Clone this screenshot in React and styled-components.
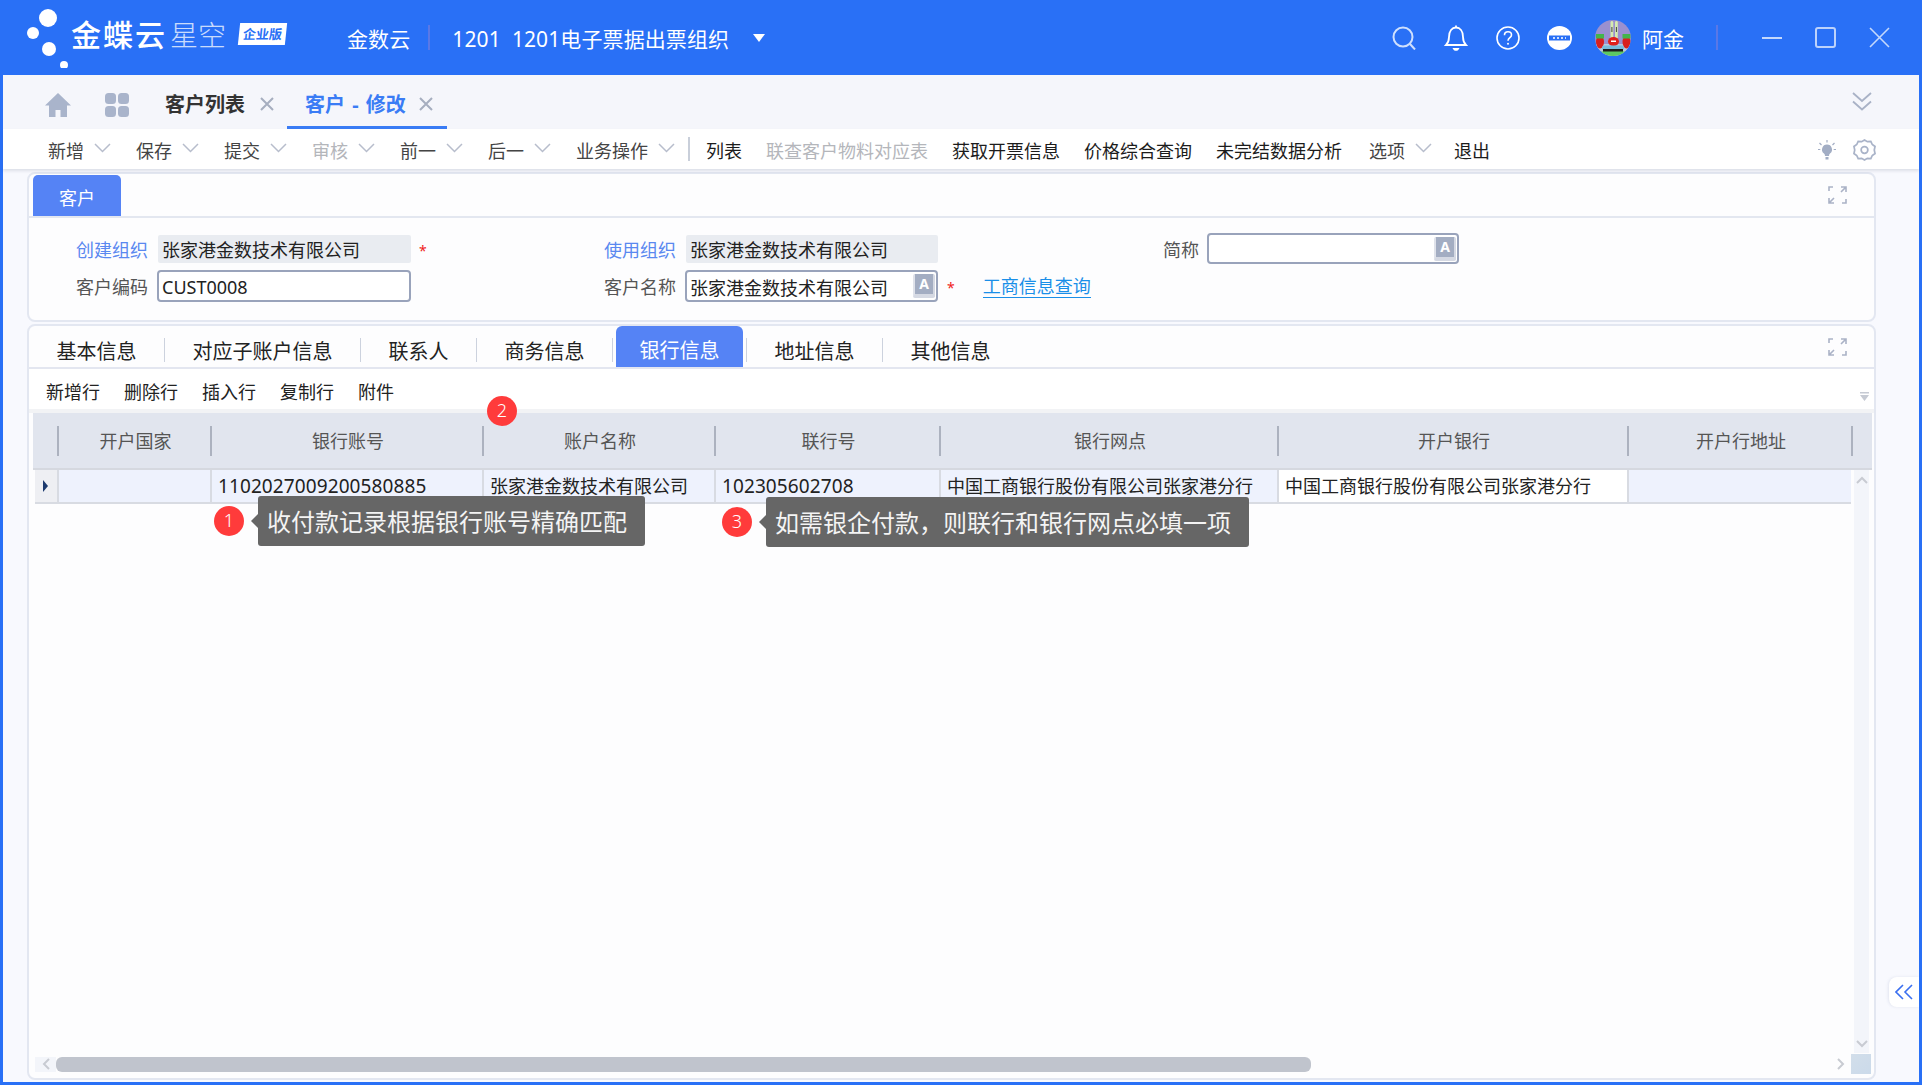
import React from 'react';
import styled, { createGlobalStyle } from 'styled-components';

const GlobalStyle = createGlobalStyle`
  html, body {
    margin: 0;
    padding: 0;
    background: #2970f6;
  }
  body {
    font-family: 'Noto Sans', 'Noto Sans CJK SC', sans-serif;
    color: #222;
  }
  * {
    box-sizing: border-box;
  }
`;

const Root = styled.div`
  position: relative;
  display: flex;
  flex-direction: column;
  width: 1922px;
  height: 1085px;
  background: #2970f6;
  overflow: hidden;
`;

/* top blue bar */
const Header = styled.header`
  display: flex;
  align-items: center;
  flex: 0 0 75px;
  padding: 0 32px 0 24px;
  color: #fff;
`;

const LogoText = styled.span`
  margin: -5px 0 0 -1px;
  font-size: 30px;
  line-height: 40px;
  font-weight: 500;
  letter-spacing: 2px;
`;

const LogoSub = styled.span`
  margin: -5px 0 0 3px;
  font-size: 28px;
  line-height: 40px;
  font-weight: 300;
  opacity: 0.75;
`;

const LogoBadge = styled.span`
  display: block;
  width: 47px;
  height: 22px;
  margin: -8px 0 0 13px;
  background: #fff;
  color: #2970f6;
  font-size: 13px;
  line-height: 22px;
  font-weight: 700;
  text-align: center;
  transform: skewX(-6deg);
`;

const OrgText = styled.span`
  margin-top: 2px;
  margin-left: ${(p) => p.$ml || 0}px;
  font-size: 21px;
  line-height: 30px;
  letter-spacing: 0.1px;
  white-space: pre;
`;

const HeaderDivider = styled.span`
  width: 2px;
  height: 25px;
  margin: 0 ${(p) => p.$mr}px 0 ${(p) => p.$ml}px;
  background: #5a78e6;
`;

const OrgCaret = styled.span`
  width: 0;
  height: 0;
  margin-left: 24px;
  border-left: 6px solid transparent;
  border-right: 6px solid transparent;
  border-top: 8px solid #fff;
`;

const HeaderTools = styled.div`
  display: flex;
  align-items: center;
  gap: 27px;
  margin-left: auto;
`;

const UserBlock = styled.span`
  display: flex;
  align-items: center;
  margin: 1px 0 0 -4px;
`;

const UserName = styled.span`
  margin: 1px 0 0 11px;
  font-size: 21px;
  line-height: 30px;
`;

const WindowButtons = styled.div`
  display: flex;
  align-items: center;
  gap: 33px;
`;

const Icon = styled.svg`
  display: block;
  flex: none;
`;

const Frame = styled.div`
  display: flex;
  flex: 1;
  flex-direction: column;
  min-height: 0;
  margin: 0 3px 3px;
  background: #f8f9fe;
`;

/* page tabs */
const PageTabs = styled.nav`
  display: flex;
  align-items: flex-end;
  flex: 0 0 54px;
  padding: 0 47px 0 42px;
  background: #f5f6fb;
`;

const PageIconSlot = styled.span`
  display: flex;
  align-items: center;
  height: 54px;
  padding-top: 5px;
  margin-right: ${(p) => p.$mr}px;
`;

const PageTab = styled.div`
  display: flex;
  align-items: center;
  gap: ${(p) => (p.$active ? 13 : 15)}px;
  height: 54px;
  padding: 6px ${(p) => (p.$active ? 14 : 13)}px 0 ${(p) => (p.$active ? 18 : 0)}px;
  border-bottom: 3px solid ${(p) => (p.$active ? '#3a7cf5' : 'transparent')};
  color: ${(p) => (p.$active ? '#3a7cf5' : '#333')};
  font-size: 20px;
  font-weight: 700;
  word-spacing: 2px;
  white-space: pre;
`;

const PageCollapse = styled.span`
  display: flex;
  align-items: center;
  height: 54px;
  padding-bottom: 2px;
  margin-left: auto;
`;

/* main toolbar */
const MainBar = styled.div`
  position: relative;
  display: flex;
  align-items: center;
  flex: 0 0 40px;
  padding: 2px 43px 0 45px;
  background: #fff;
  box-shadow: 0 2px 3px rgba(60, 70, 100, 0.14);
  font-size: 18px;
`;

const DropItem = styled.span`
  display: flex;
  align-items: center;
  gap: 10px;
  margin-right: ${(p) => p.$mr ?? 25}px;
  color: ${(p) => (p.$disabled ? '#b4b6bb' : '#444')};
`;

const ChevronSlot = styled.span`
  margin-top: -5px;
`;

const BarItem = styled.span`
  margin-right: ${(p) => p.$mr ?? 24}px;
  color: ${(p) => (p.$disabled ? '#b4b6bb' : '#1c1c1c')};
  white-space: nowrap;
`;

const BarDivider = styled.span`
  width: 2px;
  height: 24px;
  margin: -2px 16px 0 13px;
  background: #c9cfda;
`;

const BarRight = styled.span`
  display: flex;
  align-items: center;
  gap: 17px;
  margin-left: auto;
`;

const Body = styled.main`
  display: flex;
  flex: 1;
  flex-direction: column;
  gap: 2px;
  min-height: 0;
  padding: 3px 43px 2px 24px;
`;

const Card = styled.section`
  display: flex;
  flex-direction: column;
  ${(p) => (p.$grow ? 'flex: 1; min-height: 0;' : 'flex: 0 0 150px;')}
  background: #fdfdfe;
  border: 2px solid #e3e7f1;
  border-radius: 8px;
`;

const CardHead = styled.div`
  display: flex;
  align-items: flex-end;
  justify-content: space-between;
  flex: 0 0 44px;
  padding: 0 27px 0 4px;
  border-bottom: 2px solid #e3e7f0;
`;

const CardTitle = styled.div`
  width: 88px;
  height: 41px;
  background: #5583f5;
  border-radius: 5px 5px 0 0;
  color: #fff;
  font-size: 18px;
  line-height: 47px;
  text-align: center;
`;

const ExpandSlot = styled.span`
  align-self: flex-start;
  margin-top: 12px;
`;

const FormGrid = styled.div`
  display: grid;
  grid-template-columns: 128px 254px 193px 81px 253px 225px 44px 252px;
  grid-template-rows: 28px 32px;
  row-gap: 7px;
  align-items: center;
  padding-top: 17px;
  font-size: 18px;
`;

const FieldLabel = styled.label`
  padding-right: 9px;
  color: ${(p) => (p.$link ? '#5a88f0' : '#555')};
  text-align: right;
  white-space: nowrap;
`;

const ReadOnlyBox = styled.div`
  height: 28px;
  margin-left: 1px;
  padding-left: 4px;
  background: #e9ecf1;
  border-radius: 2px;
  line-height: 30px;
  white-space: nowrap;
`;

const InputBox = styled.div`
  display: flex;
  align-items: center;
  justify-content: space-between;
  height: ${(p) => p.$h || 32}px;
  margin-top: ${(p) => (p.$h ? -1 : 0)}px;
  padding: 1px 1px 0 3px;
  background: #fff;
  border: 2px solid #99a3bb;
  border-radius: 4px;
  white-space: nowrap;
`;

const LangMark = styled.span`
  display: block;
  width: 22px;
  height: 24px;
  margin-top: -1px;
  background: #a3adc2;
  border-left: 2px solid #dfe2ea;
  border-right: 2px solid #d5d9e3;
  border-bottom: 4px solid #d5d9e3;
  border-radius: 2px;
  color: #fff;
  font-size: 14px;
  font-weight: 700;
  line-height: 20px;
  text-align: center;
`;

const Required = styled.span`
  padding-left: ${(p) => p.$pl}px;
  margin-top: 3px;
  color: #f01c1c;
  font-size: 14px;
  line-height: 18px;
`;

const ExtraCell = styled.span`
  display: flex;
  align-items: center;
`;

const QueryLink = styled.a`
  margin-left: 28px;
  border-bottom: 1px solid #1a8fe8;
  color: #1a8fe8;
  line-height: 22px;
  white-space: nowrap;
`;

/* detail tabs */
const DetailTabs = styled.div`
  display: flex;
  align-items: flex-end;
  flex: 0 0 43px;
  border-bottom: 2px solid #e3e6f0;
`;

const DetailTab = styled.div`
  height: 24px;
  margin-bottom: 5px;
  padding: 0 27.5px;
  border-left: ${(p) => (p.$lead ? '1px solid #ccd2de' : '0')};
  border-right: ${(p) => (p.$last ? '0' : '1px solid #ccd2de')};
  color: #222;
  font-size: 20px;
  line-height: 27px;
  white-space: nowrap;
`;

const DetailTabActive = styled.div`
  width: 127px;
  height: 41px;
  margin: 0 3px;
  background: #5583f5;
  border-radius: 6px 6px 0 0;
  color: #fff;
  font-size: 20px;
  line-height: 50px;
  text-align: center;
`;

const DetailExpand = styled.span`
  align-self: flex-start;
  margin: 12px 27px 0 auto;
`;

const RowTools = styled.div`
  display: flex;
  align-items: center;
  flex: 0 0 40px;
  gap: 24px;
  padding: 3px 5px 0 17px;
  background: #fff;
  color: #222;
  font-size: 18px;
`;

const SortMark = styled.span`
  margin: 11px 0 0 auto;
`;

const Band = styled.div`
  flex: 0 0 4px;
  background: #f2f3f5;
`;

const TableHead = styled.div`
  display: grid;
  grid-template-columns: 26px 153px 272px 232px 225px 338px 350px 224px 19px;
  grid-template-rows: 55px;
  flex: 0 0 57px;
  margin: 0 2px 0 4px;
  background: #e1e5ee;
  border-bottom: 2px solid #d5d8df;
`;

const HeadCell = styled.div`
  height: 55px;
  color: #555;
  font-size: 18px;
  line-height: 56px;
  text-align: center;
  background: linear-gradient(#acb2bf, #acb2bf) right center / 2px 30px no-repeat;
`;

const HeadEnd = styled.div``;

const TableMain = styled.div`
  display: flex;
  flex: 1;
  min-height: 0;
  margin: 0 5px 0 6px;
`;

const TableData = styled.div`
  flex: 1;
`;

const DataRow = styled.div`
  display: grid;
  grid-template-columns: 24px 153px 272px 232px 225px 338px 350px 222px;
  grid-template-rows: 32px;
  height: 34px;
  border-bottom: 2px solid #d8dbe2;
`;

const RowMarker = styled.div`
  display: flex;
  align-items: center;
  padding-left: 8px;
  background: #eeeff3;
  border-right: 2px solid #d8dbe2;
`;

const MarkerArrow = styled.span`
  width: 0;
  height: 0;
  border-top: 6px solid transparent;
  border-bottom: 6px solid transparent;
  border-left: 5px solid #1c3a6e;
`;

const DataCell = styled.div`
  padding-left: 6px;
  overflow: hidden;
  background: ${(p) => (p.$plain ? '#fff' : '#eef2fd')};
  border-right: ${(p) => (p.$end ? '0' : '2px solid #d8dbe2')};
  color: #222;
  font-size: ${(p) => (p.$num ? 19 : 18)}px;
  letter-spacing: ${(p) => (p.$num ? 0.1 : 0)}px;
  line-height: 33px;
  white-space: nowrap;
`;

const VScroll = styled.div`
  display: flex;
  align-items: center;
  justify-content: space-between;
  flex-direction: column;
  flex: 0 0 15px;
  margin-left: 3px;
  padding: 6px 0 5px;
  background: #f3f5fa;
`;

const HScroll = styled.div`
  display: flex;
  align-items: center;
  flex: 0 0 20px;
  margin: 1px 3px 4px 6px;
`;

const HScrollStart = styled.div`
  display: flex;
  align-items: center;
  justify-content: center;
  width: 21px;
  height: 15px;
  background: #f3f5fa;
`;

const HScrollThumb = styled.div`
  width: 1255px;
  height: 15px;
  background: #c0c4cd;
  border-radius: 6px;
`;

const HScrollEnd = styled.div`
  display: flex;
  align-items: center;
  justify-content: flex-end;
  flex: 1;
  padding-right: 6px;
`;

const ScrollCorner = styled.div`
  width: 20px;
  height: 20px;
  background: linear-gradient(135deg, #d2deea, #cbdaea);
`;

/* things lying over the table */
const Badge = styled.span`
  position: absolute;
  left: ${(p) => p.$x}px;
  top: ${(p) => p.$y}px;
  width: 30px;
  height: 30px;
  background: #ff3b3b;
  border-radius: 50%;
  color: #fff;
  font-size: 18px;
  font-weight: 300;
  line-height: 29px;
  text-align: center;
`;

const Hint = styled.div`
  position: absolute;
  left: ${(p) => p.$x}px;
  top: ${(p) => p.$y}px;
  width: ${(p) => p.$w}px;
  height: 50px;
  padding-left: 9px;
  background: #666;
  border-radius: 3px;
  color: #f4f4f4;
  font-size: 24px;
  line-height: 51px;
  white-space: nowrap;
  &::before {
    content: '';
    position: absolute;
    left: -7px;
    top: 18px;
    border-top: 7px solid transparent;
    border-bottom: 7px solid transparent;
    border-right: 7px solid #666;
  }
`;

const SideToggle = styled.button`
  position: absolute;
  left: 1889px;
  top: 977px;
  display: flex;
  align-items: center;
  justify-content: center;
  width: 30px;
  height: 30px;
  padding: 0;
  background: #fff;
  border: 0;
  border-radius: 8px 0 0 8px;
  box-shadow: -1px 0 3px rgba(80, 100, 150, 0.12);
`;

const DropChevron = () => (
  <ChevronSlot>
    <Icon width="17" height="10" viewBox="0 0 17 10" fill="none" stroke="#b7bdcc" strokeWidth="1.500">
      <path d="M1 1l7.500 7.500L16 1" />
    </Icon>
  </ChevronSlot>
);

const TabClose = ({ color }) => (
  <Icon width="14" height="14" viewBox="0 0 14 14" fill="none" stroke={color} strokeWidth="2">
    <path d="M1 1l12 12M13 1L1 13" />
  </Icon>
);

const ExpandIcon = () => (
  <Icon width="19" height="18" viewBox="0 0 19 18" fill="none" stroke="#aab2c6" strokeWidth="1.600">
    <path d="M1 5V1h4M18 13v4h-4M13 1h5v5M18 1l-5 5M1 12v5h5M1 17l5-5" />
  </Icon>
);

const ScrollChevron = ({ d, w = 12, h = 8 }) => (
  <Icon width={w} height={h} viewBox={`0 0 ${w} ${h}`} fill="none" stroke="#c8cbd2" strokeWidth="2">
    <path d={d} />
  </Icon>
);

const Krabs = () => (
  <Icon width="36" height="36" viewBox="0 0 36 36">
    <defs>
      <clipPath id="avatarClip">
        <circle cx="18" cy="18" r="18" />
      </clipPath>
    </defs>
    <g clipPath="url(#avatarClip)">
      <rect width="36" height="36" fill="#9a90cf" />
      <rect y="24" width="36" height="12" fill="#b9c9dc" />
      <rect x="15.500" y="1" width="2.800" height="18" rx="1.400" fill="#d5eab0" />
      <rect x="20" y="1" width="2.800" height="18" rx="1.400" fill="#d5eab0" />
      <rect x="16.400" y="7" width="1" height="5" fill="#444" />
      <rect x="20.900" y="7" width="1" height="5" fill="#444" />
      <ellipse cx="18.500" cy="21.500" rx="5.500" ry="4.500" fill="#e0201c" />
      <rect x="16" y="20.500" width="5" height="1.500" fill="#fff" />
      <ellipse cx="5" cy="22" rx="4" ry="6.500" fill="#d8201f" />
      <ellipse cx="31.500" cy="22" rx="4" ry="6.500" fill="#d8201f" />
      <path d="M1 14h8v4.500H1zM27.500 14h8v4.500h-8z" fill="#43b54a" />
      <rect x="7" y="25.500" width="22" height="4.500" rx="2" fill="#78bcdc" />
      <rect x="8" y="29" width="20" height="3.500" fill="#1d1d1d" />
      <rect x="0" y="31.500" width="36" height="4.500" fill="#5cc863" />
    </g>
  </Icon>
);

const tableColumns = ['开户国家', '银行账号', '账户名称', '联行号', '银行网点', '开户银行', '开户行地址'];

const App = () => {
  return (
    <Root>
      <GlobalStyle />
      <Header>
        <Icon width="48" height="60" viewBox="0 0 48 60" fill="#fff">
          <circle cx="24" cy="10" r="9" />
          <circle cx="9" cy="25" r="6" />
          <circle cx="25" cy="41" r="7" />
          <circle cx="40" cy="57" r="4" />
        </Icon>
        <LogoText>金蝶云</LogoText>
        <LogoSub>星空</LogoSub>
        <LogoBadge>企业版</LogoBadge>
        <OrgText $ml={61}>金数云</OrgText>
        <HeaderDivider $ml={18} $mr={22} />
        <OrgText>{'1201  1201电子票据出票组织'}</OrgText>
        <OrgCaret />
        <HeaderTools>
          <Icon width="24" height="24" viewBox="0 0 24 24" fill="none" stroke="#cfe0fd" strokeWidth="2">
            <circle cx="11" cy="11" r="9.500" />
            <path d="M18 18l5 5.500" />
          </Icon>
          <Icon width="26" height="27" viewBox="0 0 26 27" fill="none" stroke="#fff" strokeWidth="1.800">
            <path d="M13 1.500v2M3 21c2-2 3-4 3-8 0-6 3-9.500 7-9.500s7 3.500 7 9.500c0 4 1 6 3 8z" />
            <path d="M9.500 24h7c-.8 2-2 2.800-3.500 2.800S10.300 26 9.500 24z" fill="#fff" stroke="none" />
          </Icon>
          <Icon width="24" height="24" viewBox="0 0 24 24" fill="none" stroke="#fff" strokeWidth="1.600">
            <circle cx="12" cy="12" r="11" />
            <path d="M8.500 9.200C8.500 7 10 5.800 12 5.800s3.500 1.300 3.500 3.200c0 2.600-3.500 2.800-3.500 5.800" />
            <circle cx="12" cy="17.800" r="1" fill="#fff" stroke="none" />
          </Icon>
          <Icon width="25" height="24" viewBox="0 0 25 24">
            <ellipse cx="12.500" cy="12" rx="12.500" ry="12" fill="#fff" />
            <rect x="2" y="9.500" width="21" height="5" fill="#2970f6" />
            <path d="M6 12h13" stroke="#fff" strokeWidth="1.500" strokeDasharray="2 2" />
          </Icon>
          <UserBlock>
            <Krabs />
            <UserName>阿金</UserName>
          </UserBlock>
        </HeaderTools>
        <HeaderDivider $ml={32} $mr={44} />
        <WindowButtons>
          <Icon width="20" height="20" viewBox="0 0 20 20" stroke="#c4d8fc" strokeWidth="2">
            <path d="M0 10h20" />
          </Icon>
          <Icon width="21" height="21" viewBox="0 0 21 21" fill="none" stroke="#bcd2fb" strokeWidth="2">
            <rect x="1" y="1" width="19" height="19" rx="2" />
          </Icon>
          <Icon width="21" height="21" viewBox="0 0 21 21" stroke="#c4d8fc" strokeWidth="1.600">
            <path d="M1 1l19 19M20 1L1 20" />
          </Icon>
        </WindowButtons>
      </Header>

      <Frame>
        <PageTabs>
          <PageIconSlot $mr={34}>
            <Icon width="26" height="24" viewBox="0 0 26 24" fill="#a9b4cb">
              <path d="M13 0L0 12.500h4V24h6.500v-7h5v7H22V12.500h4z" />
            </Icon>
          </PageIconSlot>
          <PageIconSlot $mr={36}>
            <Icon width="24" height="24" viewBox="0 0 24 24" fill="#a9b4cb">
              <rect x="0" y="0" width="11" height="11" rx="3.500" />
              <rect x="13" y="0" width="11" height="11" rx="3.500" />
              <rect x="0" y="13" width="11" height="11" rx="3.500" />
              <rect x="13" y="13" width="11" height="11" rx="3.500" />
            </Icon>
          </PageIconSlot>
          <PageTab>
            客户列表
            <TabClose color="#a6aebf" />
          </PageTab>
          <PageTab $active>
            客户 - 修改
            <TabClose color="#a6aebf" />
          </PageTab>
          <PageCollapse>
            <Icon width="20" height="19" viewBox="0 0 20 19" fill="none" stroke="#a9b2c6" strokeWidth="1.800">
              <path d="M1 1l9 8 9-8M1 9.500l9 8 9-8" />
            </Icon>
          </PageCollapse>
        </PageTabs>

        <MainBar>
          <DropItem>新增<DropChevron /></DropItem>
          <DropItem>保存<DropChevron /></DropItem>
          <DropItem>提交<DropChevron /></DropItem>
          <DropItem $disabled>审核<DropChevron /></DropItem>
          <DropItem>前一<DropChevron /></DropItem>
          <DropItem>后一<DropChevron /></DropItem>
          <DropItem $mr={0}>业务操作<DropChevron /></DropItem>
          <BarDivider />
          <BarItem>列表</BarItem>
          <BarItem $disabled>联查客户物料对应表</BarItem>
          <BarItem>获取开票信息</BarItem>
          <BarItem>价格综合查询</BarItem>
          <BarItem $mr={27}>未完结数据分析</BarItem>
          <DropItem $mr={22}>选项<DropChevron /></DropItem>
          <BarItem>退出</BarItem>
          <BarRight>
            <Icon width="18" height="20" viewBox="0 0 18 20" fill="#a2adc4">
              <path d="M9 4.500a5 5 0 0 0-3 9c.7.6 1 1.500 1 2.500h4c0-1 .3-1.900 1-2.500a5 5 0 0 0-3-9zM7.500 17h3v2.500h-3z" />
              <path d="M9 0v2.500M1.500 3l2 2M16.500 3l-2 2M0 9.500h2.300M15.700 9.500H18" stroke="#a2adc4" strokeWidth="1.200" />
            </Icon>
            <Icon width="23" height="24" viewBox="0 0 24 24" fill="none" stroke="#a9b3c8" strokeWidth="1.800">
              <circle cx="12" cy="12" r="3.500" />
              <path d="M12 1.500l3 1.800 3.600-.2 1.500 3.200 2.900 2-.8 3.700.8 3.700-2.900 2-1.500 3.200-3.600-.2-3 1.800-3-1.800-3.600.2-1.500-3.200-2.900-2 .8-3.700-.8-3.700 2.900-2 1.500-3.200 3.600.2z" />
            </Icon>
          </BarRight>
        </MainBar>

        <Body>
          <Card>
            <CardHead>
              <CardTitle>客户</CardTitle>
              <ExpandSlot><ExpandIcon /></ExpandSlot>
            </CardHead>
            <FormGrid>
              <FieldLabel $link>创建组织</FieldLabel>
              <ReadOnlyBox>张家港金数技术有限公司</ReadOnlyBox>
              <ExtraCell><Required $pl={8}>*</Required></ExtraCell>
              <FieldLabel $link>使用组织</FieldLabel>
              <ReadOnlyBox>张家港金数技术有限公司</ReadOnlyBox>
              <span />
              <FieldLabel>简称</FieldLabel>
              <InputBox $h={31}><span /><LangMark>A</LangMark></InputBox>

              <FieldLabel>客户编码</FieldLabel>
              <InputBox>CUST0008</InputBox>
              <span />
              <FieldLabel>客户名称</FieldLabel>
              <InputBox>张家港金数技术有限公司<LangMark>A</LangMark></InputBox>
              <ExtraCell>
                <Required $pl={9}>*</Required>
                <QueryLink>工商信息查询</QueryLink>
              </ExtraCell>
            </FormGrid>
          </Card>

          <Card $grow>
            <DetailTabs>
              <DetailTab>基本信息</DetailTab>
              <DetailTab>对应子账户信息</DetailTab>
              <DetailTab>联系人</DetailTab>
              <DetailTab>商务信息</DetailTab>
              <DetailTabActive>银行信息</DetailTabActive>
              <DetailTab $lead>地址信息</DetailTab>
              <DetailTab $last>其他信息</DetailTab>
              <DetailExpand><ExpandIcon /></DetailExpand>
            </DetailTabs>
            <RowTools>
              <span>新增行</span>
              <span>删除行</span>
              <span>插入行</span>
              <span>复制行</span>
              <span>附件</span>
              <SortMark>
                <Icon width="9" height="9" viewBox="0 0 9 9" fill="#c6cad3">
                  <path d="M0 0h9v1.500H0zM0 3h9L4.500 9z" />
                </Icon>
              </SortMark>
            </RowTools>
            <Band />
            <TableHead>
              <HeadCell />
              {tableColumns.map((name) => (
                <HeadCell key={name}>{name}</HeadCell>
              ))}
              <HeadEnd />
            </TableHead>
            <TableMain>
              <TableData>
                <DataRow>
                  <RowMarker><MarkerArrow /></RowMarker>
                  <DataCell />
                  <DataCell $num>1102027009200580885</DataCell>
                  <DataCell>张家港金数技术有限公司</DataCell>
                  <DataCell $num>102305602708</DataCell>
                  <DataCell>中国工商银行股份有限公司张家港分行</DataCell>
                  <DataCell $plain>中国工商银行股份有限公司张家港分行</DataCell>
                  <DataCell $end />
                </DataRow>
              </TableData>
              <VScroll>
                <ScrollChevron d="M1 7l5-5 5 5" />
                <ScrollChevron d="M1 1l5 5 5-5" />
              </VScroll>
            </TableMain>
            <HScroll>
              <HScrollStart><ScrollChevron w={8} h={12} d="M7 1L2 6l5 5" /></HScrollStart>
              <HScrollThumb />
              <HScrollEnd><ScrollChevron w={8} h={12} d="M1 1l5 5-5 5" /></HScrollEnd>
              <ScrollCorner />
            </HScroll>
          </Card>
        </Body>
      </Frame>

      <Badge $x={487} $y={396}>2</Badge>
      <Badge $x={214} $y={506}>1</Badge>
      <Hint $x={258} $y={496} $w={387}>收付款记录根据银行账号精确匹配</Hint>
      <Badge $x={722} $y={507}>3</Badge>
      <Hint $x={766} $y={497} $w={483}>如需银企付款，则联行和银行网点必填一项</Hint>
      <SideToggle aria-label="展开">
        <Icon width="18" height="16" viewBox="0 0 18 16" fill="none" stroke="#3a6ff0" strokeWidth="1.600">
          <path d="M8 1L1 8l7 7M17 1l-7 7 7 7" />
        </Icon>
      </SideToggle>
    </Root>
  );
};

export default App;
